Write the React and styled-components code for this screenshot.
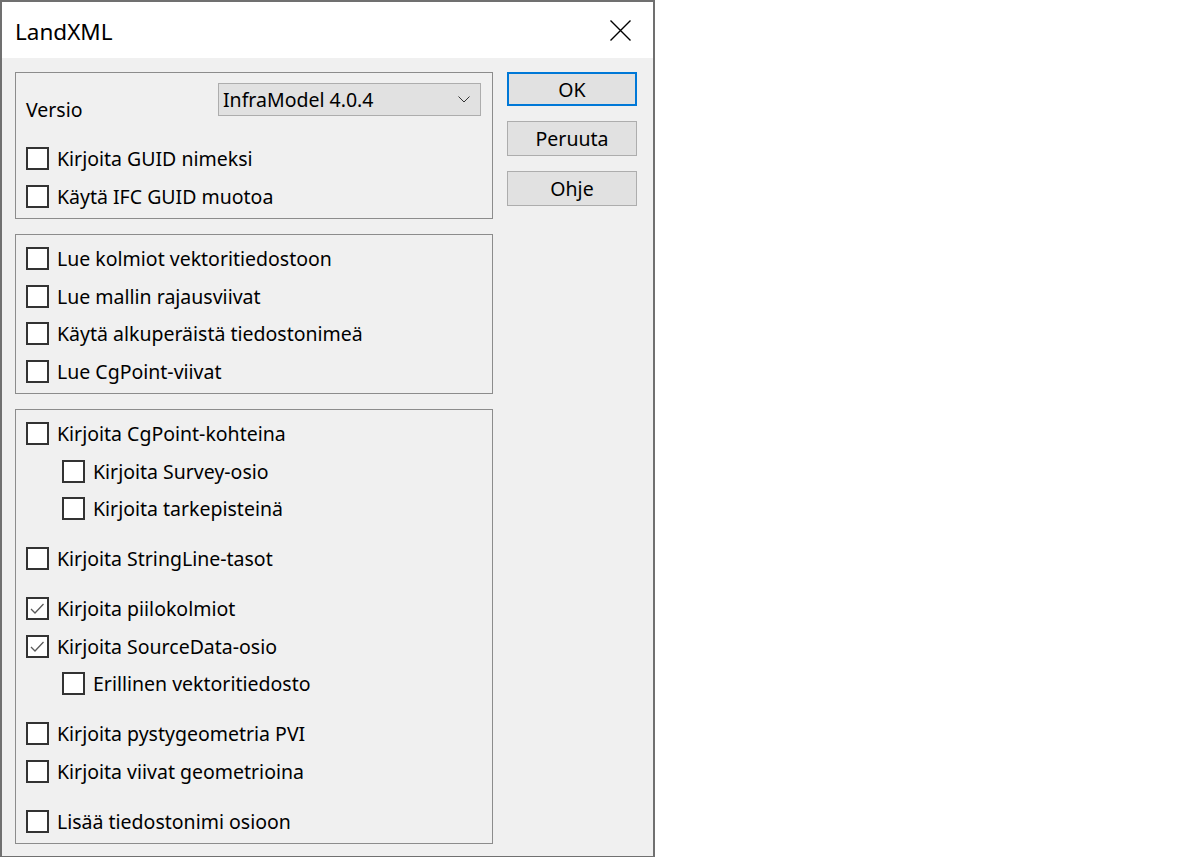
import React from 'react';
import styled, { createGlobalStyle } from 'styled-components';

const GlobalStyle = createGlobalStyle`
    html, body {
        margin: 0;
        padding: 0;
        background: #FFFFFF;
    }
    body {
        font-family: "Noto Sans", "Open Sans", "Liberation Sans", sans-serif;
        color: #000000;
    }
`;

//DIALOG FRAME
const Dialog = styled.div`
    width: 655px;
    height: 857px;
    box-sizing: border-box;
    border: 2px solid #707070;
    border-bottom-width: 1px;
    background: #F0F0F0;
    display: flex;
    flex-direction: column;
`;

const TitleBar = styled.div`
    height: 56px;
    background: #FFFFFF;
    display: flex;
    flex-direction: row;
    align-items: center;
    justify-content: space-between;
    padding-left: 13px;
    padding-right: 22px;
    flex-shrink: 0;
`;

const Title = styled.h1`
    margin: 0;
    font-size: 22.5px;
    font-weight: 400;
    margin-top: 2px;
`;

const CloseBtn = styled.div`
    width: 22px;
    height: 22px;
    display: flex;
    align-items: center;
    justify-content: center;
`;

//BODY
const Body = styled.div`
    display: flex;
    flex-direction: row;
    padding: 14px 0 0 13px;
    gap: 14px;
`;

const LeftCol = styled.div`
    display: flex;
    flex-direction: column;
    gap: 15px;
    width: 478px;
`;

const Group = styled.div`
    border: 1px solid #8C8C8C;
    padding: ${p => p.$pad || '5px 0 3px 0'};
    display: flex;
    flex-direction: column;
`;

const VersionRow = styled.div`
    display: flex;
    flex-direction: row;
    justify-content: space-between;
    height: 57px;
    padding-left: 10px;
    padding-right: 11px;
`;

const Label = styled.span`
    font-size: 19.5px;
    margin-top: 13px;
`;

const Select = styled.div`
    width: 263px;
    height: 33px;
    box-sizing: border-box;
    background: #E1E1E1;
    border: 1px solid #ADADAD;
    display: flex;
    flex-direction: row;
    align-items: center;
    justify-content: space-between;
    padding-left: 4px;
    padding-right: 10px;
    font-size: 19.5px;
`;

//CHECKBOX ROW
const Row = styled.div`
    height: 37.5px;
    display: flex;
    flex-direction: row;
    align-items: center;
    padding-left: ${p => (p.$indent ? 46 : 10)}px;
    margin-top: ${p => (p.$gap ? 12.5 : 0)}px;
    font-size: 19.5px;
    white-space: nowrap;
`;

const Box = styled.div`
    width: 23px;
    height: 23px;
    box-sizing: border-box;
    border: 2px solid #333333;
    background: #FFFFFF;
    margin-right: 8px;
    display: flex;
    align-items: center;
    justify-content: center;
    flex-shrink: 0;
`;

//BUTTONS
const RightCol = styled.div`
    display: flex;
    flex-direction: column;
    gap: 15px;
`;

const Btn = styled.button`
    width: 130px;
    height: ${p => (p.$default ? 34 : 35)}px;
    box-sizing: border-box;
    background: #E1E1E1;
    border: ${p => (p.$default ? '2px solid #0078D7' : '1px solid #ADADAD')};
    font-family: inherit;
    font-size: 19.5px;
    color: #000000;
    padding: 0;
    margin: 0;
`;

const Check = ({ checked }) => (
    <Box>
        {checked && (
            <svg width="19" height="19" viewBox="0 0 19 19">
                <path d="M3 10 L7 14 L15.5 5" fill="none" stroke="#5A5A5A" strokeWidth="1.3" />
            </svg>
        )}
    </Box>
);

const CheckRow = ({ label, checked, indent, gap }) => (
    <Row $indent={indent} $gap={gap}>
        <Check checked={checked} />
        <span>{label}</span>
    </Row>
);

const groupTwo = [
    'Lue kolmiot vektoritiedostoon',
    'Lue mallin rajausviivat',
    'Käytä alkuperäistä tiedostonimeä',
    'Lue CgPoint-viivat',
];

const groupThree = [
    { label: 'Kirjoita CgPoint-kohteina' },
    { label: 'Kirjoita Survey-osio', indent: true },
    { label: 'Kirjoita tarkepisteinä', indent: true },
    { label: 'Kirjoita StringLine-tasot', gap: true },
    { label: 'Kirjoita piilokolmiot', gap: true, checked: true },
    { label: 'Kirjoita SourceData-osio', checked: true },
    { label: 'Erillinen vektoritiedosto', indent: true },
    { label: 'Kirjoita pystygeometria PVI', gap: true },
    { label: 'Kirjoita viivat geometrioina' },
    { label: 'Lisää tiedostonimi osioon', gap: true },
];

const App = () => {
    return <>
        <GlobalStyle />
        <Dialog>
            <TitleBar>
                <Title>LandXML</Title>
                <CloseBtn>
                    <svg width="21" height="21" viewBox="0 0 21 21">
                        <path d="M0.5 0.5 L20.5 20.5 M20.5 0.5 L0.5 20.5" stroke="#000" strokeWidth="1.4" />
                    </svg>
                </CloseBtn>
            </TitleBar>

            <Body>
                <LeftCol>
                    <Group $pad="10px 0 3px 0">
                        <VersionRow>
                            <Label>Versio</Label>
                            <Select>
                                <span>InfraModel 4.0.4</span>
                                <svg width="12" height="7" viewBox="0 0 12 7">
                                    <path d="M0.5 0.5 L6 6 L11.5 0.5" fill="none" stroke="#333" strokeWidth="1" />
                                </svg>
                            </Select>
                        </VersionRow>
                        <CheckRow label="Kirjoita GUID nimeksi" />
                        <CheckRow label="Käytä IFC GUID muotoa" />
                    </Group>

                    <Group>
                        {groupTwo.map(l => <CheckRow key={l} label={l} />)}
                    </Group>

                    <Group>
                        {groupThree.map(r => <CheckRow key={r.label} {...r} />)}
                    </Group>
                </LeftCol>

                <RightCol>
                    <Btn $default>OK</Btn>
                    <Btn>Peruuta</Btn>
                    <Btn>Ohje</Btn>
                </RightCol>
            </Body>
        </Dialog>
    </>
}

export default App;
